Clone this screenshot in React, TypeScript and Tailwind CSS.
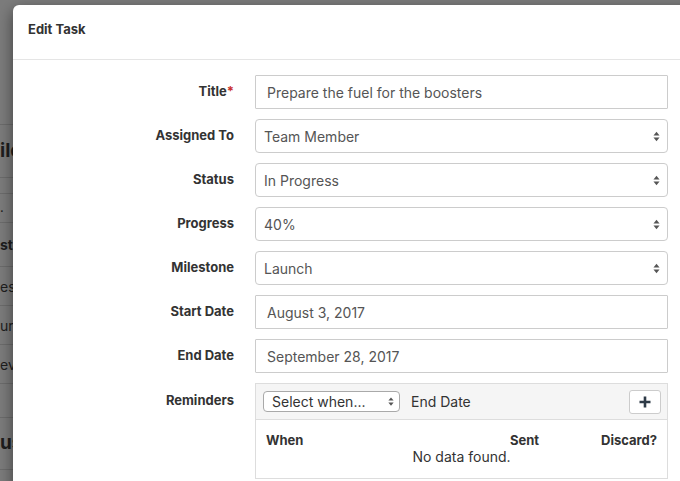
import React from 'react';

const font = { fontFamily: 'Inter, "Liberation Sans", Arial, sans-serif' };

const SelectArrows = ({ className = '' }: { className?: string }) => (
  <svg viewBox="0 0 8 12" className={className} fill="#555">
    <path d="M4 0.5 L7.5 4.8 H0.5 Z" />
    <path d="M4 11.5 L7.5 7.2 H0.5 Z" />
  </svg>
);

const Row = ({ label, required, children }: { label: string; required?: boolean; children: React.ReactNode }) => (
  <div className="flex items-center">
    <div className="w-[206px] text-right text-[13px] font-bold text-[#333]">
      {label}
      {required && <span className="text-[#c9302c]">*</span>}
    </div>
    <div className="ml-[21px] w-[413px]">{children}</div>
  </div>
);

const TextInput = ({ value }: { value: string }) => (
  <div className="h-[34px] flex items-center px-[11px] border border-[#ccc] rounded-[1px] bg-white text-[14px] text-[#555]">
    {value}
  </div>
);

const SelectBox = ({ value }: { value: string }) => (
  <div className="h-[34px] flex items-center justify-between pl-[8px] pr-[7px] border border-[#ccc] rounded-[4px] bg-white text-[14px] text-[#555]">
    <span>{value}</span>
    <SelectArrows className="w-[7px] h-[11px]" />
  </div>
);

// what shows of the page behind the dialog, cut by the dialog's left edge
const bgRows = [
  { h: 125, text: '', cls: '' },
  { h: 53, text: 'ile', cls: 'text-[19px] font-bold' },
  { h: 16, text: '', cls: '' },
  { h: 29, text: '.', cls: 'text-[13px]' },
  { h: 44, text: 'st', cls: 'text-[14px] font-bold' },
  { h: 39, text: 'est', cls: 'text-[14px]' },
  { h: 39, text: 'ur', cls: 'text-[14px]' },
  { h: 39, text: 'eve', cls: 'text-[14px]' },
  { h: 34, text: '', cls: '' },
  { h: 52, text: 'us', cls: 'text-[19px] font-bold' },
];

export default function App() {
  return (
    <div className="relative w-[680px] h-[481px] overflow-hidden bg-[#7c7c7c]" style={font}>
      <div className="flex flex-col text-[#1e1e1e]">
        {bgRows.map((r, i) => (
          <div
            key={i}
            style={{ height: r.h }}
            className="flex items-center whitespace-nowrap border-b border-[#6c6c6c]"
          >
            <span className={r.cls}>{r.text}</span>
          </div>
        ))}
      </div>

      <div className="absolute left-[13px] top-[5px] w-[720px] h-[520px] bg-white rounded-[6px] shadow-[0_5px_15px_rgba(0,0,0,0.5)]">
        <div className="h-[55px] border-b border-[#e5e5e5] pl-[15px] pt-[15px]">
          <div className="text-[13px] font-bold text-[#333] leading-[18px]">Edit Task</div>
        </div>

        <div className="pl-[15px] pt-[15px] flex flex-col gap-[10px]">
          <Row label="Title" required>
            <TextInput value="Prepare the fuel for the boosters" />
          </Row>
          <Row label="Assigned To">
            <SelectBox value="Team Member" />
          </Row>
          <Row label="Status">
            <SelectBox value="In Progress" />
          </Row>
          <Row label="Progress">
            <SelectBox value="40%" />
          </Row>
          <Row label="Milestone">
            <SelectBox value="Launch" />
          </Row>
          <Row label="Start Date">
            <TextInput value="August 3, 2017" />
          </Row>
          <Row label="End Date">
            <TextInput value="September 28, 2017" />
          </Row>

          <div className="flex items-start">
            <div className="w-[206px] pt-[8px] text-right text-[13px] font-bold text-[#333]">Reminders</div>
            <div className="ml-[21px] w-[413px] border border-[#ddd]">
              <div className="h-[36px] flex items-center bg-[#f5f5f5] border-b border-[#ddd] pl-[7px] pr-[6px]">
                <div className="w-[137px] h-[21px] flex items-center justify-between pl-[8px] pr-[5px] border border-[#a9a9a9] rounded-[4px] bg-white text-[14px] text-[#333]">
                  <span>Select when...</span>
                  <SelectArrows className="w-[6px] h-[9px]" />
                </div>
                <span className="ml-[11px] text-[14px] text-[#333]">End Date</span>
                <div className="ml-auto w-[32px] h-[24px] flex items-center justify-center bg-white border border-[#ccc] rounded-[3px]">
                  <svg viewBox="0 0 12 12" className="w-[12px] h-[12px]">
                    <path d="M6 0.5 V11.5 M0.5 6 H11.5" stroke="#2e3a47" strokeWidth="2.6" />
                  </svg>
                </div>
              </div>
              <div className="pt-[12px] pb-[11px] px-[10px] bg-white">
                <div className="flex items-center text-[13px] font-bold text-[#333] leading-[16px]">
                  <span className="flex-1">When</span>
                  <span>Sent</span>
                  <span className="w-[118px] text-right">Discard?</span>
                </div>
                <div className="text-center text-[14px] text-[#333] leading-[20px] -mt-[1px]">No data found.</div>
              </div>
            </div>
          </div>
        </div>
      </div>
    </div>
  );
}
